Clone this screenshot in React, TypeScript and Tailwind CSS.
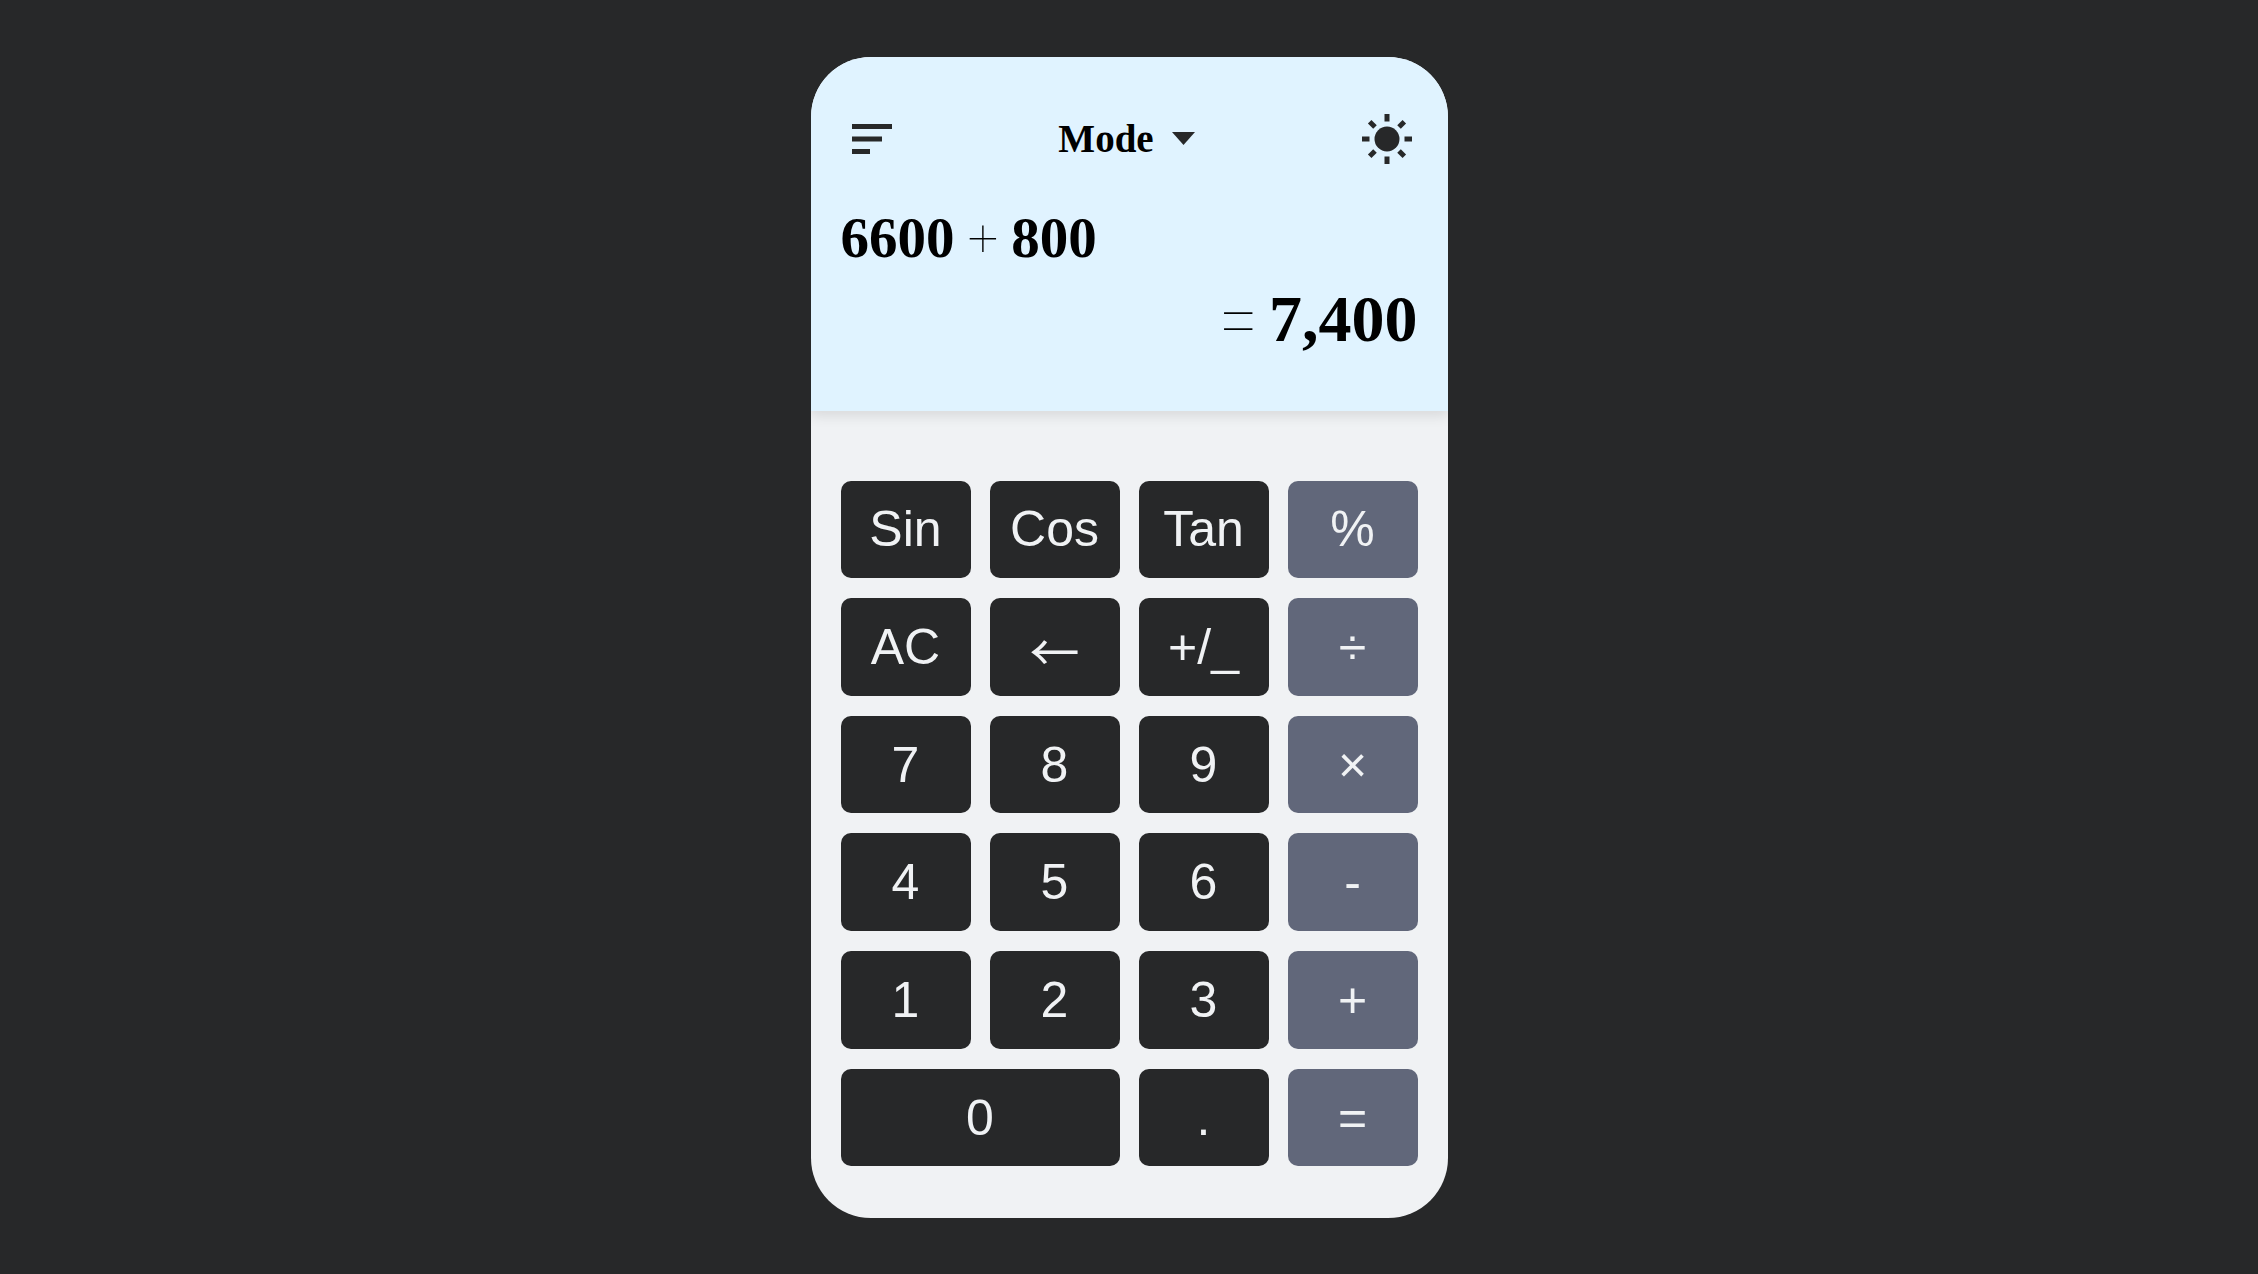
type Key = { label: string; name?: string; operator?: boolean; wide?: boolean; arrow?: boolean };

const keys: Key[] = [
  { label: 'Sin' },
  { label: 'Cos' },
  { label: 'Tan' },
  { label: '%', name: 'Percent', operator: true },
  { label: 'AC', name: 'All clear' },
  { label: '←', name: 'Backspace', arrow: true },
  { label: '+/_', name: 'Toggle sign' },
  { label: '÷', name: 'Divide', operator: true },
  { label: '7' },
  { label: '8' },
  { label: '9' },
  { label: '×', name: 'Multiply', operator: true },
  { label: '4' },
  { label: '5' },
  { label: '6' },
  { label: '-', name: 'Subtract', operator: true },
  { label: '1' },
  { label: '2' },
  { label: '3' },
  { label: '+', name: 'Add', operator: true },
  { label: '0', wide: true },
  { label: '.', name: 'Decimal point' },
  { label: '=', name: 'Equals', operator: true },
];

function MenuIcon() {
  return (
    <svg width="40" height="30" viewBox="0 0 40 30" fill="currentColor" aria-hidden="true">
      <path d="M0 0h40v5H0zM0 12.5h30v5H0zM0 25h18v5H0z" />
    </svg>
  );
}

function SunIcon() {
  return (
    <svg width="50" height="50" viewBox="0 0 50 50" fill="currentColor" aria-hidden="true">
      <circle cx="25" cy="25" r="12.5" />
      {[0, 45, 90, 135, 180, 225, 270, 315].map((angle) => (
        <rect
          key={angle}
          x="22.5"
          y={angle % 90 === 0 ? 0 : 0.5}
          width="5"
          height="7.5"
          transform={`rotate(${angle} 25 25)`}
        />
      ))}
    </svg>
  );
}

function Display() {
  return (
    <section className="bg-[#e0f3ff] px-[30px] pt-[57px] pb-[52px] font-['Liberation_Serif',serif] text-black shadow-[0_5px_12px_rgba(0,0,0,0.1)]">
      <header className="flex items-center justify-between pr-[6px] pl-[11px] text-[#272829]">
        <button type="button" aria-label="Menu">
          <MenuIcon />
        </button>
        <button type="button" className="flex items-center gap-[18px] text-[39px] leading-[50px] font-bold">
          <span className="text-black">Mode</span>
          <svg width="23" height="13" viewBox="0 0 23 13" fill="currentColor" aria-hidden="true">
            <path d="M0 0h23L11.5 13z" />
          </svg>
        </button>
        <button type="button" aria-label="Light theme">
          <SunIcon />
        </button>
      </header>
      <p className="mt-[39px] flex items-center gap-2 text-[57px] leading-[70px] font-bold">
        <span>6600</span>
        <span className="pb-2 font-['Inter',sans-serif] text-[64px] leading-[60px] font-thin">+</span>
        <span>800</span>
      </p>
      <output className="mt-[6px] flex items-center justify-end gap-1 text-[66px] leading-[80px] font-bold">
        <span className="pb-2 font-['Inter',sans-serif] text-[84px] leading-[70px] font-thin">=</span>
        <span>7,400</span>
      </output>
    </section>
  );
}

export default function App() {
  return (
    <main className="flex min-h-screen items-center justify-center bg-[#272829] font-['Liberation_Sans',sans-serif]">
      <div className="w-full max-w-[637px] overflow-hidden rounded-[60px] bg-[#f0f2f4]">
        <Display />
        <section
          aria-label="Keypad"
          className="mx-[30px] mt-[70px] mb-[51px] grid h-[686px] grid-cols-4 grid-rows-6 gap-x-[19px] gap-y-5"
        >
          {keys.map((key) => (
            <button
              key={key.label}
              type="button"
              aria-label={key.name}
              className={`rounded-[10px] text-[50px] leading-none text-[#f0f2f4] ${
                key.operator ? 'bg-[#61677a]' : 'bg-[#272829]'
              } ${key.wide ? 'col-span-2' : ''} ${key.arrow ? "pt-1 font-['Noto_Sans_CJK_JP',sans-serif]" : ''}`}
            >
              {key.label}
            </button>
          ))}
        </section>
      </div>
    </main>
  );
}
